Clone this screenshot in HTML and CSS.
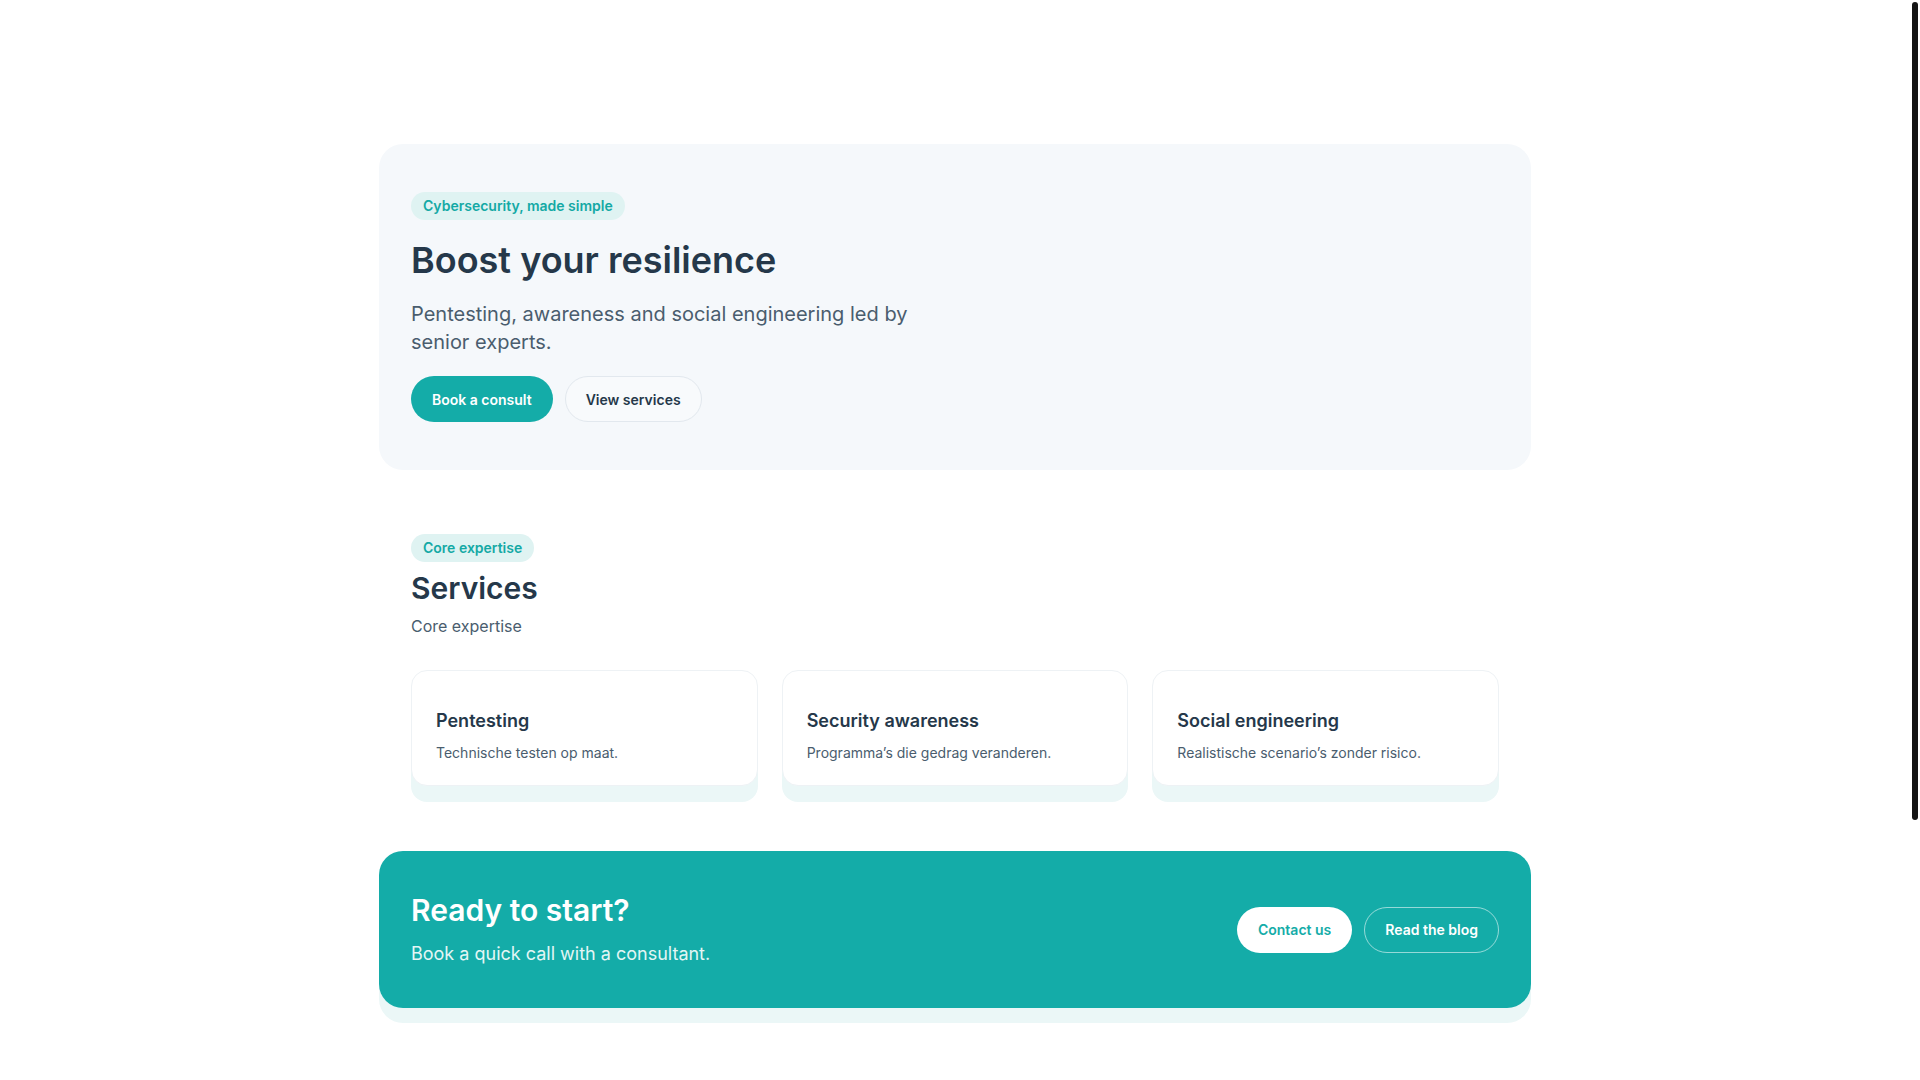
FILE: index.html
```html
<!DOCTYPE html>
<html lang="en">
<head>
<meta charset="utf-8">
<title>Boost your resilience</title>
<link rel="stylesheet" href="styles.css">
</head>
<body>
<main class="page">
  <section class="hero">
    <span class="badge">Cybersecurity, made simple</span>
    <h1 class="hero-title">Boost your resilience</h1>
    <p class="hero-lead">Pentesting, awareness and social engineering led by senior experts.</p>
    <div class="actions">
      <a class="btn btn-primary" href="#">Book a consult</a>
      <a class="btn btn-outline" href="#">View services</a>
    </div>
  </section>

  <section class="services">
    <span class="badge">Core expertise</span>
    <h2 class="section-title">Services</h2>
    <p class="section-sub">Core expertise</p>
    <div class="cards">
      <article class="card">
        <h3 class="card-title">Pentesting</h3>
        <p class="card-text">Technische testen op maat.</p>
      </article>
      <article class="card">
        <h3 class="card-title">Security awareness</h3>
        <p class="card-text">Programma’s die gedrag veranderen.</p>
      </article>
      <article class="card">
        <h3 class="card-title">Social engineering</h3>
        <p class="card-text">Realistische scenario’s zonder risico.</p>
      </article>
    </div>
  </section>

  <section class="cta">
    <div class="cta-text">
      <h2 class="cta-title">Ready to start?</h2>
      <p class="cta-sub">Book a quick call with a consultant.</p>
    </div>
    <div class="cta-actions">
      <a class="btn btn-light" href="#">Contact us</a>
      <a class="btn btn-ghost" href="#">Read the blog</a>
    </div>
  </section>
</main>
<div class="scroll-thumb" aria-hidden="true"></div>
</body>
</html>
```
FILE: styles.css
```css
html {
  background: #ffffff;
  scrollbar-width: none;
}
::-webkit-scrollbar {
  width: 0;
  height: 0;
}
body {
  margin: 0;
  padding-right: 10px;
  font-family: Inter, "Noto Sans", "Liberation Sans", sans-serif;
  color: #25384a;
  background: #ffffff;
}
.scroll-thumb {
  position: fixed;
  top: 2px;
  right: 2px;
  width: 6px;
  height: 818px;
  border-radius: 3px;
  background: #141414;
}
.page {
  width: 1152px;
  margin: 0 auto;
  padding: 144px 0 396px;
}
.badge {
  display: inline-block;
  padding: 6px 12px;
  border-radius: 999px;
  background: #dff3f2;
  color: #14a9a5;
  font-size: 14px;
  line-height: 16px;
  font-weight: 600;
}
.hero {
  display: flex;
  flex-direction: column;
  align-items: flex-start;
  background: #f5f8fb;
  border-radius: 24px;
  padding: 48px 32px;
}
.hero-title {
  margin: 19px 0 0;
  font-size: 36px;
  line-height: 43px;
  font-weight: 600;
  color: #25384a;
}
.hero-lead {
  margin: 18px 0 0;
  max-width: 520px;
  font-size: 20px;
  line-height: 28px;
  color: #4a5d6e;
}
.actions {
  display: flex;
  gap: 12px;
  margin-top: 20px;
}
.btn {
  display: inline-flex;
  align-items: center;
  justify-content: center;
  height: 46px;
  box-sizing: border-box;
  padding: 0 20px;
  border-radius: 999px;
  border: 1px solid transparent;
  font-size: 14px;
  font-weight: 600;
  text-decoration: none;
}
.btn-primary {
  background: #14aca8;
  color: #ffffff;
}
.btn-outline {
  background: #f8fafc;
  border-color: #e2e8ee;
  color: #25384a;
}
.services {
  display: flex;
  flex-direction: column;
  align-items: flex-start;
  padding: 64px 32px 65px;
}
.section-title {
  margin: 8px 0 0;
  font-size: 30px;
  line-height: 36px;
  font-weight: 600;
  color: #25384a;
}
.section-sub {
  margin: 8px 0 0;
  font-size: 16px;
  line-height: 24px;
  color: #4a5d6e;
}
.cards {
  align-self: stretch;
  display: grid;
  grid-template-columns: repeat(3, 1fr);
  gap: 24px;
  margin-top: 32px;
}
.card {
  background: #ffffff;
  border: 1px solid #eef2f5;
  border-radius: 16px;
  padding: 38px 24px 22px;
  box-shadow: 0 16px 0 0 #ebf7f7;
}
.card-title {
  margin: 0 0 10px;
  font-size: 18px;
  line-height: 23px;
  font-weight: 600;
  color: #25384a;
}
.card-text {
  margin: 0;
  font-size: 14px;
  line-height: 21px;
  color: #4a5d6e;
}
.cta {
  display: flex;
  align-items: center;
  justify-content: space-between;
  background: #14aca8;
  border-radius: 24px;
  padding: 41px 32px;
  box-shadow: 0 15px 0 0 #ebf7f7;
}
.cta-title {
  margin: 0;
  font-size: 30px;
  line-height: 36px;
  font-weight: 600;
  color: #ffffff;
}
.cta-sub {
  margin: 12px 0 0;
  font-size: 18px;
  line-height: 27px;
  color: #e3f6f5;
}
.cta-actions {
  display: flex;
  gap: 12px;
}
.btn-light {
  background: #ffffff;
  color: #14aca8;
}
.btn-ghost {
  background: transparent;
  border-color: rgba(255, 255, 255, 0.55);
  color: #ffffff;
}
```
